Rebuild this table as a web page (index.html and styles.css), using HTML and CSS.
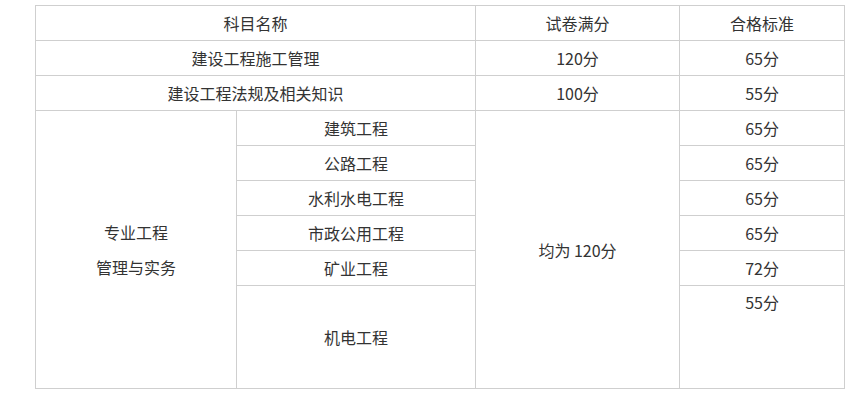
FILE: index.html
```html
<!DOCTYPE html>
<html lang="zh-CN">
<head>
<meta charset="utf-8">
<link rel="stylesheet" href="styles.css">
</head>
<body>
<table class="score-table">
  <colgroup>
    <col class="c1"><col class="c2"><col class="c3"><col class="c4">
  </colgroup>
  <tr>
    <td colspan="2">科目名称</td>
    <td>试卷满分</td>
    <td>合格标准</td>
  </tr>
  <tr>
    <td colspan="2">建设工程施工管理</td>
    <td>120分</td>
    <td>65分</td>
  </tr>
  <tr>
    <td colspan="2">建设工程法规及相关知识</td>
    <td>100分</td>
    <td>55分</td>
  </tr>
  <tr>
    <td rowspan="6" class="multi"><p>专业工程</p><p>管理与实务</p></td>
    <td>建筑工程</td>
    <td rowspan="6">均为 120分</td>
    <td>65分</td>
  </tr>
  <tr>
    <td>公路工程</td>
    <td>65分</td>
  </tr>
  <tr>
    <td>水利水电工程</td>
    <td>65分</td>
  </tr>
  <tr>
    <td>市政公用工程</td>
    <td>65分</td>
  </tr>
  <tr>
    <td>矿业工程</td>
    <td>72分</td>
  </tr>
  <tr class="tall">
    <td>机电工程</td>
    <td class="top">55分</td>
  </tr>
</table>
</body>
</html>
```
FILE: styles.css
```css
html, body {
  background: #fff;
}
body {
  margin: 5px 0 0 35px;
  font-family: "Noto Sans CJK SC", "Noto Sans", sans-serif;
  font-size: 16px;
  color: #333;
}
.score-table {
  border-collapse: collapse;
  table-layout: fixed;
  width: 809px;
}
.c1 { width: 201px; }
.c2 { width: 239px; }
.c3 { width: 204px; }
.c4 { width: 165px; }
.score-table td {
  border: 1px solid #cfcfcf;
  height: 34px;
  padding: 0;
  text-align: center;
  vertical-align: middle;
  line-height: 20px;
}
.score-table tr.tall td {
  height: 102px;
}
.score-table tr.tall td.top {
  vertical-align: top;
  padding-top: 6px;
  height: 96px;
}
.multi p {
  margin: 0;
  line-height: 35px;
}
```
